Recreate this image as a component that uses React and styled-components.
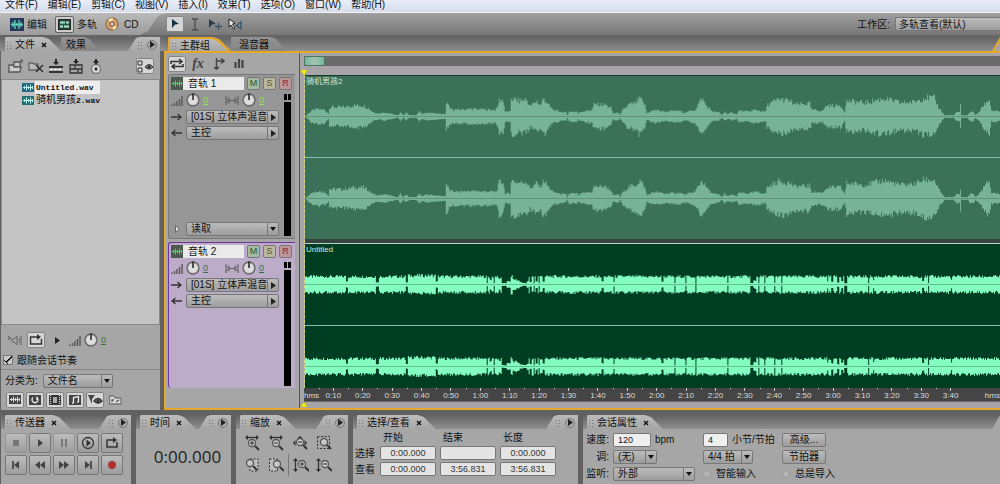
import React from 'react'
import styled, { createGlobalStyle, css } from 'styled-components'

const menus = ['文件(F)', '编辑(E)', '剪辑(C)', '视图(V)', '插入(I)', '效果(T)', '选项(O)', '窗口(W)', '帮助(H)']

// [position, half height] of the vocal clip
const vocals = [
  [0, 0], [2, 2], [6, 6], [12, 8], [19, 7], [23, 3], [24, 2], [24, 10], [40, 10], [48, 12], [58, 12], [63, 9], [67, 5],
  [72, 3], [80, 4], [88, 2], [91, 1], [93, 1], [95, 5], [98, 1], [101, 4], [104, 1], [111, 1], [114, 5], [117, 2],
  [121, 4], [130, 3], [140, 2], [141, 2], [141, 16], [145, 8], [152, 7], [165, 8], [190, 7], [192, 9], [194, 18],
  [198, 18], [200, 5], [205, 5], [206, 20], [214, 17], [221, 19], [225, 11], [232, 17], [235, 12], [239, 20],
  [243, 13], [248, 7], [254, 5], [261, 4], [262, 1], [264, 5], [272, 5], [273, 3], [276, 5], [287, 7], [289, 13],
  [300, 13], [306, 9], [308, 3], [314, 4], [315, 1], [318, 7], [324, 13], [330, 14], [335, 20], [340, 12], [342, 3],
  [345, 5], [350, 7], [360, 5], [374, 6], [380, 4], [390, 7], [397, 20], [402, 11], [408, 5], [414, 4], [417, 1],
  [420, 5], [423, 2], [427, 4], [432, 2], [434, 6], [444, 5], [450, 7], [460, 5], [461, 5], [462, 12], [474, 19],
  [485, 17], [490, 13], [505, 14], [507, 7], [518, 6], [522, 12], [536, 12], [540, 5], [542, 17], [560, 15],
  [580, 20], [595, 15], [610, 16], [620, 21], [630, 20], [634, 10], [638, 4], [640, 1], [649, 1], [653, 5],
  [655, 4], [656, 12], [657, 1], [663, 1], [666, 5], [669, 5], [671, 1], [675, 5], [679, 12], [685, 19], [687, 6],
  [695, 5]
]

// [start, width, half height] of the dips in the backing clip
const dips = [
  [41, 2, 3], [71, 3, 2], [101, 2, 2], [131, 2, 3], [182, 1, 1], [185, 2, 5], [189, 1, 1], [194, 2, 6], [197, 5, 1],
  [202, 4, 3], [206, 2, 9], [208, 4, 5], [212, 3, 4], [215, 3, 2], [218, 4, 1], [222, 2, 3], [225, 2, 2], [229, 1, 1],
  [231, 2, 3], [234, 1, 1], [238, 2, 3], [297, 2, 3], [309, 1, 2], [357, 2, 3], [370, 1, 1], [381, 1, 1],
  [391, 1, 0], [423, 1, 1], [446, 3, 1], [449, 3, 4], [454, 1, 1], [460, 1, 1], [470, 1, 1], [477, 1, 1],
  [523, 1, 4], [527, 2, 3], [533, 2, 2], [537, 2, 4], [540, 3, 1], [564, 1, 1], [569, 1, 4], [618, 2, 4],
  [624, 1, 1], [647, 1, 4]
]

const noise = (n) => {
  const v = Math.sin(n * 12.9898) * 43758.5453
  return v - Math.floor(v)
}

const vocalAmp = (x) => {
  let i = 0
  while (i < vocals.length - 2 && vocals[i + 1][0] <= x) i++
  const [x0, a0] = vocals[i]
  const [x1, a1] = vocals[i + 1]
  return a0 + ((a1 - a0) * (x - x0)) / (x1 - x0 || 1)
}

const backingAmp = (x) => {
  const dip = dips.find(([s, w]) => x >= s && x < s + w)
  if (dip) return dip[2]
  return x > 102 && x < 131 ? 9.6 : 8.4
}

const wavePath = (amp, seed) => {
  let top = ''
  let bottom = ''
  for (let x = 0; x < 696; x++) {
    const up = amp(x) * (0.7 + 0.36 * noise(x + seed))
    const down = amp(x) * (0.7 + 0.36 * noise(x + seed + 900))
    top += `L${x} ${(40 - up).toFixed(1)}H${x + 1}`
    bottom = `L${x + 1} ${(41 + down).toFixed(1)}H${x}` + bottom
  }
  return `M0 40${top}${bottom}Z`
}

const Channel = ({ amp, seed, color }) => (
  <Wave viewBox='0 0 696 81' preserveAspectRatio='none'>
    <path d={wavePath(amp, seed)} fill={color} />
    <path d='M0 40.5H696' stroke='#3c5a4d' strokeOpacity='.4' />
  </Wave>
)

const Icon = ({ w = 16, h = 16, children }) => (
  <svg width={w} height={h} viewBox={`0 0 ${w} ${h}`} fill='none' stroke='#333' strokeWidth='1.3'>
    {children}
  </svg>
)

const Close = () => (
  <Icon w={6} h={6}>
    <path d='M1 1l4 4M5 1L1 5' stroke='#111' strokeWidth='1.4' />
  </Icon>
)
const Play = () => (
  <Icon w={5} h={7}>
    <path d='M0 0l5 3.5L0 7z' fill='#222' stroke='none' />
  </Icon>
)
const Down = () => (
  <Icon w={6} h={4}>
    <path d='M0 0h6L3 4z' fill='#111' stroke='none' />
  </Icon>
)
const WaveIcon = ({ bg = '#1d566d', fg = '#b9f3ed' }) => (
  <Icon w={12} h={9}>
    <path d='M0 0h12v9H0z' fill={bg} stroke='none' />
    <path d='M1 4.500h10M2.500 3v3M4.500 1.500v6M6.500 3v3M8.500 1.500v6M10.500 3v3' stroke={fg} strokeWidth='1' />
  </Icon>
)
const Bars = ({ w = 12 }) => (
  <Icon w={w} h={11}>
    <path d='M1 11V9.500M3.500 11V8M6 11V6M8.500 11V4M11 11V1' stroke='#555' strokeWidth='1.4' />
  </Icon>
)
const Pan = () => (
  <Icon w={14} h={9}>
    <path d='M1 0v9M13 0v9M4 1.500v6M10 1.500v6M1 2l3 2.500L1 7M13 2l-3 2.500L13 7M4 4.500h6' stroke='#5c5c5c' strokeWidth='1' />
  </Icon>
)
const Dial = () => (
  <Icon w={14} h={14}>
    <circle cx='7' cy='7' r='6' fill='#c4c4c4' stroke='#666' />
    <circle cx='7' cy='7' r='4.500' fill='#dedede' stroke='none' />
    <path d='M7 7V0.500' stroke='#111' strokeWidth='1.4' />
  </Icon>
)
const Arrow = ({ back }) => (
  <Icon w={11} h={8}>
    <path d={back ? 'M11 4H1M4.500 1L1 4l3.500 3' : 'M0 4h10M6.500 1L10 4 6.500 7'} />
  </Icon>
)
const Loop = () => (
  <Icon w={14} h={12}>
    <path d='M8 3H1.500v7h11V5M5 10h3' strokeWidth='1.500' />
    <path d='M8 0l4 3-4 3z' fill='#333' stroke='none' />
  </Icon>
)
const Swap = () => (
  <Icon w={14} h={12}>
    <path d='M1 6V3.500h10M9 1l3 2.500L9 6M13 6v2.500H3M5 6L2 8.500 5 11' strokeWidth='1.500' />
  </Icon>
)
const Lens = ({ x, y, minus }) => (
  <>
    <path d={`M${x + 3} ${y + 3}l4 4`} strokeWidth='2' />
    <circle cx={x} cy={y} r='3.500' fill='#c9c9c9' stroke='#555' />
    {minus !== undefined && <path d={`M${x - 2} ${y}h4${minus ? '' : `M${x} ${y - 2}v4`}`} strokeWidth='1.1' />}
  </>
)
const Across = () => (
  <>
    <path d='M3 2.500h10' />
    <path d='M4 0v5L1 2.500zM12 0v5l3-2.500z' fill='#333' stroke='none' />
  </>
)
const Upright = () => (
  <>
    <path d='M2.500 3v10' />
    <path d='M0 4h5L2.500 1zM0 12h5l-2.500 3z' fill='#333' stroke='none' />
  </>
)

const zoomIcons = [
  ['水平放大', <Icon><Across /><Lens x={8} y={8} minus={false} /></Icon>],
  ['水平缩小', <Icon><Across /><Lens x={8} y={8} minus /></Icon>],
  ['全部缩小', <Icon><path d='M5 3.500h6L8 1zM3.500 5v6L1 8zM12.500 5v6L15 8z' fill='#333' stroke='none' /><Lens x={8} y={7} minus /></Icon>],
  ['缩放到选择', <Icon><path d='M1.500 1.500h12v12h-12z' strokeWidth='1' strokeDasharray='2 1.500' /><Lens x={8} y={7} /></Icon>],
  ['缩放左边', <Icon><path d='M6 2h8v12H6z' fill='#bdbdbd' strokeWidth='1' strokeDasharray='2 1.500' /><Lens x={6} y={6} /></Icon>],
  ['缩放右边', <Icon><path d='M1.500 2h8v12h-8z' fill='#bdbdbd' strokeWidth='1' strokeDasharray='2 1.500' /><Lens x={9} y={7} /></Icon>],
  ['垂直放大', <Icon><Upright /><Lens x={9} y={7} minus={false} /></Icon>],
  ['垂直缩小', <Icon><Upright /><Lens x={9} y={7} minus /></Icon>]
]

const transport = [
  ['停止', <path d='M4 4h6v6H4z' fill='#777' stroke='none' />, true],
  ['播放', <path d='M5 3l5 4-5 4z' fill='#444' stroke='none' />],
  ['暂停', <path d='M5 3v8M9 3v8' stroke='#777' strokeWidth='2' />, true],
  ['从光标播放', <><circle cx='7' cy='7' r='5.500' /><path d='M5.500 3.500L10 7l-4.500 3.500z' fill='#333' stroke='none' /></>],
  ['循环播放', <><path d='M8 4H2v7h10V6M5 11h3' strokeWidth='1.500' /><path d='M8 1l4 3-4 3z' fill='#333' stroke='none' /></>],
  ['转到开始', <><path d='M4 3v8' strokeWidth='1.500' /><path d='M10 3v8L5 7z' fill='#444' stroke='none' /></>],
  ['倒带', <path d='M7 3v8L2 7zM12 3v8L7 7z' fill='#444' stroke='none' />],
  ['快进', <path d='M2 3v8l5-4zM7 3v8l5-4z' fill='#444' stroke='none' />],
  ['转到结尾', <><path d='M10 3v8' strokeWidth='1.500' /><path d='M4 3v8l5-4z' fill='#444' stroke='none' /></>],
  ['录音', <circle cx='7' cy='7' r='3.500' fill='#bd2929' stroke='#934848' />]
]

const PanelTabs = ({ tabs, active, noMenu }) => (
  <Strip>
    {tabs.map((t, i) => (
      <Tab key={t} $back={i > 0} $active={active && i === 0}>
        <TabFace $back={i > 0} $active={active}>
          {i === 0 && <Grip />}
          {t}
          {i === 0 && !active && <Close />}
        </TabFace>
      </Tab>
    ))}
    <Spacer />
    {active || noMenu ? (
      <Corner $active={active} />
    ) : (
      <PanelMenu>
        <Grip />
        <RoundButton aria-label='面板菜单'><Play /></RoundButton>
      </PanelMenu>
    )}
  </Strip>
)

const Pick = ({ id, label, value, side, width }) => (
  <PickBox $width={width}>
    <select id={id} aria-label={label} defaultValue={value}>
      <option>{value}</option>
    </select>
    <PickArrow>{side ? <Play /> : <Down />}</PickArrow>
  </PickBox>
)

const Track = ({ name, selected }) => (
  <TrackHead $selected={selected}>
    <TrackTop>
      <TrackBadge><WaveIcon bg='#4c5a4d' fg='#4fd466' /></TrackBadge>
      <NameInput aria-label='音轨名称' defaultValue={name} />
      <Toggle $tone='#a3baa3' $ink='#1f5a2c'>M</Toggle>
      <Toggle $tone='#b9b89f' $ink='#55511f'>S</Toggle>
      <Toggle $tone='#bd9498' $ink='#8a2530'>R</Toggle>
    </TrackTop>
    <TrackBody>
      <TrackControls>
        <KnobRow>
          <Bars />
          <Dial />
          <Amount $dim={selected}>0</Amount>
          <Pan />
          <Dial />
          <Amount $dim={selected}>0</Amount>
        </KnobRow>
        <RouteRow><Arrow /><Pick label='输入' value='[01S] 立体声混音' side /></RouteRow>
        <RouteRow><Arrow back /><Pick label='输出' value='主控' side /></RouteRow>
        {!selected && (
          <AutoRow>
            <Icon w={5} h={8}><path d='M.5 .5L4.500 4 .5 7.500z' fill='#ddd' stroke='#666' strokeWidth='1' /></Icon>
            <Pick label='自动' value='读取' />
          </AutoRow>
        )}
      </TrackControls>
      <Meter />
    </TrackBody>
  </TrackHead>
)

const times = Array.from({ length: 22 }, (_, i) => {
  const s = (i + 1) * 10
  return `${Math.floor(s / 60)}:${String(s % 60).padStart(2, '0')}`
})

const App = () => (
  <Page>
    <GlobalStyle />
    <MenuBar>
      {menus.map(m => <MenuItem key={m}>{m}</MenuItem>)}
    </MenuBar>
    <ToolBar>
      <Views>
        <ViewButton>
          <Icon w={14} h={13}>
            <path d='M0 0h14v13H0z' fill='#243859' stroke='none' />
            <path d='M1 6.500h12M3 4v5M5 2v9M7 5v3M9 2v9M11 4v5' stroke='#62d6bd' />
          </Icon>
          编辑
        </ViewButton>
        <ViewButton>
          <IconFrame>
            <Icon w={13} h={11}>
              <path d='M.5 .5h12v10H.5z' fill='#2d5247' stroke='#222' />
              <path d='M2 3.500h5M8 3.500h3M2 7.500h3M6 7.500h5' stroke='#a8e7c8' strokeWidth='2' />
            </Icon>
          </IconFrame>
          多轨
        </ViewButton>
        <ViewButton $wide>
          <Icon w={14} h={14}>
            <circle cx='7' cy='7' r='6' fill='#d8a46d' stroke='#9b704a' />
            <path d='M7 7L3 2.500A6 6 0 0 1 8 1zM7 7l5 3a6 6 0 0 1-4 3z' fill='#f3dfaf' stroke='none' />
            <circle cx='7' cy='7' r='2' fill='#eee' stroke='#8b634a' />
          </Icon>
          CD
        </ViewButton>
      </Views>
      <Tools>
        <IconButton aria-label='混合工具' $on>
          <Icon w={12} h={12}><path d='M3 1l7 5-4 .5L3 10z' fill='#163243' stroke='none' /></Icon>
        </IconButton>
        <IconButton aria-label='时间选择工具'>
          <Icon w={8} h={13}><path d='M1 1h2l1 1 1-1h2M4 2v9M1 12h2l1-1 1 1h2' stroke='#4d4d4d' /></Icon>
        </IconButton>
        <IconButton aria-label='移动工具'>
          <Icon w={14} h={13}><path d='M1 1l7 5-4 .5L1 10z' fill='#253f50' stroke='none' /><path d='M10.500 5v7M7 8.500h7' stroke='#35566c' /></Icon>
        </IconButton>
        <IconButton aria-label='刷选工具'>
          <Icon w={15} h={13}><path d='M1 1l6 4-2.500 1L7 10l-1.500 1-2.500-4L1 9z' fill='#eee' stroke='#222' strokeWidth='1' /><path d='M13 4L8.500 7.500 13 11z' stroke='#35566c' /></Icon>
        </IconButton>
      </Tools>
      <Spacer />
      <Workspace>
        工作区:
        <select defaultValue='多轨查看(默认)'><option>多轨查看(默认)</option></select>
      </Workspace>
    </ToolBar>

    <Middle>
      <FilePanel>
        <PanelTabs tabs={['文件', '效果']} />
        <FileTools>
          <IconButton aria-label='导入文件'>
            <Icon w={16} h={15}><path d='M1 13V6h4l1 2h7l-1 5zM6 6V3h6v4M12 2l2-1v3' fill='#ccc' stroke='#555' /></Icon>
          </IconButton>
          <IconButton aria-label='关闭文件'>
            <Icon w={16} h={15}><path d='M1 11V4h4l1 1h4v6z' fill='#bbb' stroke='#666' /><path d='M8 6l7 7M15 6l-7 7' strokeWidth='1.500' /></Icon>
          </IconButton>
          <IconButton aria-label='插入多轨'>
            <Icon w={14} h={15}><path d='M4 3h6L7 6zM6 0h2v3H6z' fill='#222' stroke='none' /><path d='M0 7h14v2H0zM0 12h14v2H0z' fill='#333' stroke='none' /><path d='M1 10.500h12' stroke='#eee' strokeDasharray='3 1' /></Icon>
          </IconButton>
          <IconButton aria-label='编辑文件'>
            <Icon w={14} h={15}><path d='M4 2h6L7 5zM6 0h2v3H6z' fill='#222' stroke='none' /><path d='M1 6h12v8H1zM1 10h12M6 7v3M9 10v4' /></Icon>
          </IconButton>
          <IconButton aria-label='插入 CD'>
            <Icon w={12} h={15}><circle cx='6' cy='10' r='4.500' fill='#ddd' stroke='#777' /><path d='M3 2h6L6 6zM5 0h2v3H5z' fill='#222' stroke='none' /><circle cx='6' cy='10' r='1' /></Icon>
          </IconButton>
          <Spacer />
          <IconButton aria-label='显示选项' $on>
            <Icon w={16} h={13}><path d='M1 1h4v4H1zM1 8h4v4H1z' strokeWidth='1' /><path d='M8 7q4-5 8 0-4 4-8 0z' fill='#888' strokeWidth='1' /><circle cx='12' cy='7' r='1' fill='#222' /></Icon>
          </IconButton>
        </FileTools>
        <FileList>
          <FileItem><WaveIcon bg='#236887' /><FileName $on>Untitled.wav</FileName></FileItem>
          <FileItem><WaveIcon bg='#2a6f72' /><FileName><Han>骑机男孩</Han>2.wav</FileName></FileItem>
        </FileList>
        <Preview>
          <IconButton aria-label='自动播放'>
            <Icon w={14} h={11}><path d='M4 4h2l3-3v9L6 7H4zM11 3q2 3 0 5M13 1v9M0 1l3 2-3 2z' stroke='#666' strokeWidth='1' /></Icon>
          </IconButton>
          <IconButton aria-label='循环' $on><Loop /></IconButton>
          <IconButton aria-label='播放'><Play /></IconButton>
          <Bars />
          <Dial />
          <Amount $dim>0</Amount>
        </Preview>
        <Check>
          <input type='checkbox' defaultChecked />
          跟随会话节奏
        </Check>
        <SortRow>
          <label htmlFor='sort'>分类为:</label>
          <Pick id='sort' value='文件名' width='70px' />
        </SortRow>
        <FilterRow>
          <IconButton aria-label='波形' $on><WaveIcon bg='#444' fg='#ddd' /></IconButton>
          <IconButton aria-label='循环文件' $on>
            <Icon w={12} h={10}><path d='M0 0h12v10H0z' fill='#444' stroke='none' /><path d='M4 2.500a3 3 0 1 0 4 0V5' stroke='#eee' /></Icon>
          </IconButton>
          <IconButton aria-label='视频' $on>
            <Icon w={12} h={10}><path d='M0 0h12v10H0z' fill='#333' stroke='none' /><path d='M1.500 0v10M10.500 0v10' stroke='#ddd' strokeDasharray='1 1' /><path d='M4 2h4v6H4z' fill='#aaa' stroke='none' /></Icon>
          </IconButton>
          <IconButton aria-label='MIDI' $on>
            <Icon w={12} h={10}><path d='M0 0h12v10H0z' fill='#444' stroke='none' /><path d='M4.500 8V2.500L9.500 1.500V7M3 8h1.500M8 7h1.500' stroke='#eee' /></Icon>
          </IconButton>
          <IconButton aria-label='过滤' $on>
            <Icon w={15} h={11}><path d='M0 1h7L4 5v5z' fill='#444' stroke='none' /><path d='M6 7q4-5 8 0-4 4-8 0z' fill='#888' /><circle cx='10' cy='7' r='1' /></Icon>
          </IconButton>
          <IconButton aria-label='完整路径'>
            <Icon w={13} h={10}><path d='M.5 9V1H5l1 2h6v6z' fill='#ddd' stroke='#777' /><path d='M3 7V5h2M7 7l3-2' stroke='#555' /></Icon>
          </IconButton>
        </FilterRow>
      </FilePanel>

      <MainPanel>
        <PanelTabs tabs={['主群组', '混音器']} active />
        <MainBody>
          <TrackColumn>
            <TrackTools>
              <IconButton aria-label='输入输出' $on><Swap /></IconButton>
              <FxButton>fx</FxButton>
              <IconButton aria-label='发送'>
                <Icon w={11} h={13}><path d='M2.500 1v11M0 10l2.500 2L5 10M2.500 4H10M7 1.500L10 4 7 6.500' stroke='#444' strokeWidth='1.500' /></Icon>
              </IconButton>
              <IconButton aria-label='均衡'>
                <Icon w={10} h={9}><path d='M1.500 3v6M5 0v9M8.500 1v8' stroke='#444' strokeWidth='2.200' /></Icon>
              </IconButton>
            </TrackTools>
            <Track name='音轨 1' />
            <Track name='音轨 2' selected />
            <ColumnFoot />
          </TrackColumn>
          <Canvas>
            <Overview><OverviewThumb /></Overview>
            <MarkerStrip>
              <Icon w={8} h={5}><path d='M0 0h8L4 5z' fill='#f5ee18' stroke='#a79c1d' strokeWidth='.5' /></Icon>
            </MarkerStrip>
            <Lanes>
              <Clip>
                <ClipName>骑机男孩2</ClipName>
                <Channel amp={vocalAmp} seed={3} color='#77b397' />
                <Divider />
                <Channel amp={vocalAmp} seed={61} color='#77b397' />
              </Clip>
              <Clip $selected>
                <ClipName>Untitled</ClipName>
                <Channel amp={backingAmp} seed={5} color='#84fdc1' />
                <Divider />
                <Channel amp={backingAmp} seed={44} color='#84fdc1' />
              </Clip>
            </Lanes>
            <Ruler>
              <RulerEnd $span={0.5}>hms</RulerEnd>
              {times.map(t => <RulerCell key={t}>{t}</RulerCell>)}
              <RulerEnd $span={1.18} $right>hms</RulerEnd>
            </Ruler>
            <MarkerStrip $foot>
              <Icon w={8} h={5}><path d='M0 5h8L4 0z' fill='#f5ee18' stroke='#a79c1d' strokeWidth='.5' /></Icon>
            </MarkerStrip>
          </Canvas>
        </MainBody>
      </MainPanel>
    </Middle>

    <Bottom>
      <Dock $width='130px'>
        <PanelTabs tabs={['传送器']} />
        <TransportGrid>
          {transport.map(([label, shape, off]) => (
            <TransportButton key={label} aria-label={label} disabled={off}>
              <Icon w={14} h={14}>{shape}</Icon>
            </TransportButton>
          ))}
        </TransportGrid>
      </Dock>
      <Dock $width='95px'>
        <PanelTabs tabs={['时间']} />
        <Clock>0:00.000</Clock>
      </Dock>
      <Dock $width='112px'>
        <PanelTabs tabs={['缩放']} />
        <ZoomGrid>
          {zoomIcons.map(([label, icon], i) => (
            <ZoomButton key={label} aria-label={label} $line={i === 6}>{icon}</ZoomButton>
          ))}
        </ZoomGrid>
      </Dock>
      <Dock $width='225px'>
        <PanelTabs tabs={['选择/查看']} />
        <TimeTable>
          <thead>
            <tr><td /><th>开始</th><th>结束</th><th>长度</th></tr>
          </thead>
          <tbody>
            <tr>
              <th>选择</th>
              <td><TimeInput aria-label='选择开始' defaultValue='0:00.000' /></td>
              <td><TimeInput aria-label='选择结束' /></td>
              <td><TimeInput aria-label='选择长度' defaultValue='0:00.000' /></td>
            </tr>
            <tr>
              <th>查看</th>
              <td><TimeInput aria-label='查看开始' defaultValue='0:00.000' /></td>
              <td><TimeInput aria-label='查看结束' defaultValue='3:56.831' /></td>
              <td><TimeInput aria-label='查看长度' defaultValue='3:56.831' /></td>
            </tr>
          </tbody>
        </TimeTable>
      </Dock>
      <Dock>
        <PanelTabs tabs={['会话属性']} noMenu />
        <Session>
          <FieldLabel htmlFor='tempo'>速度:</FieldLabel>
          <Field><ValueInput id='tempo' defaultValue='120' $width='38px' />bpm</Field>
          <Field><ValueInput id='beats' defaultValue='4' $width='25px' /><label htmlFor='beats'>小节/节拍</label></Field>
          <PushButton>高级...</PushButton>
          <FieldLabel htmlFor='key'>调:</FieldLabel>
          <Pick id='key' value='(无)' width='44px' />
          <Pick label='拍号' value='4/4 拍' width='50px' />
          <PushButton>节拍器</PushButton>
          <FieldLabel htmlFor='monitor'>监听:</FieldLabel>
          <Pick id='monitor' value='外部' width='82px' />
          <Option><input type='checkbox' />智能输入</Option>
          <Option><input type='checkbox' />总是导入</Option>
        </Session>
      </Dock>
    </Bottom>
  </Page>
)

export default App

//styles

const GlobalStyle = createGlobalStyle`
  * {
    box-sizing: border-box;
  }
  body {
    margin: 0;
    background: #616161;
  }
  body, button, input, select {
    font-family: 'Liberation Sans', 'Noto Sans CJK SC', sans-serif;
    font-size: 10px;
    line-height: 13px;
    color: #111;
  }
  button, input, select {
    margin: 0;
    padding: 0;
    border: 0;
    background: none;
  }
  svg {
    display: block;
    flex: none;
  }
`

const raised = css`
  border: 1px solid #777;
  border-radius: 2px;
  background: linear-gradient(#bcbcbc, #9d9d9d);
`

const Page = styled.div`
  display: flex;
  flex-direction: column;
  height: 100vh;
  min-height: 480px;
  overflow: hidden;
`
const MenuBar = styled.nav`
  display: flex;
  flex: none;
  gap: 10px;
  height: 13px;
  padding-left: 5px;
  align-items: flex-start;
  background: linear-gradient(#e8edf8, #d5dded);
  border-bottom: 1px solid #f3f3f3;
  overflow: hidden;
`
const MenuItem = styled.button`
  height: 10px;
  line-height: 10px;
  white-space: nowrap;
`
const ToolBar = styled.header`
  display: flex;
  flex: none;
  align-items: stretch;
  height: 22px;
  background: linear-gradient(#9f9f9f, #777);
`
const Views = styled.div`
  display: flex;
  align-items: center;
  gap: 8px;
  width: 166px;
  padding-left: 10px;
  background: linear-gradient(#bababa, #9c9c9c);
  clip-path: polygon(0 0, 100% 0, 158px 3px, 148px 18px, 140px 100%, 0 100%);
`
const ViewButton = styled.button`
  display: flex;
  align-items: center;
  gap: ${props => (props.$wide ? '5px' : '3px')};
`
const IconFrame = styled.span`
  padding: 2px;
  background: #ccc;
  border: 1px solid #666;
  border-radius: 2px;
`
const Tools = styled.div`
  display: flex;
  align-items: center;
  gap: 2px;
`
const IconButton = styled.button`
  display: flex;
  align-items: center;
  justify-content: center;
  min-width: 18px;
  height: 16px;
  border-radius: 2px;
  ${props => props.$on && css`
    background: #d6d6d6;
    border: 1px solid #858585;
  `}
`
const Spacer = styled.div`
  flex: 1;
`
const Workspace = styled.label`
  display: flex;
  align-items: center;
  gap: 5px;

  select {
    ${raised}
    appearance: none;
    width: 105px;
    height: 14px;
    padding-left: 3px;
    border-right: 0;
    border-radius: 2px 0 0 2px;
  }
`
const Middle = styled.main`
  display: flex;
  flex: 1;
  gap: 4px;
  min-height: 0;
  padding: 2px 0 0 1px;
  background: linear-gradient(#626262, #939393 16px, #626262 16px);
`
const FilePanel = styled.section`
  display: flex;
  flex-direction: column;
  flex: none;
  width: 159px;
  background: #a6a6a6;
`
const Strip = styled.div`
  display: flex;
  flex: none;
  height: 14px;
  padding-left: 4px;
  background: linear-gradient(#626262, #8f8f8f);
`
const Tab = styled.button`
  height: 14px;
  ${props => !props.$back && 'clip-path: polygon(0 1px, 1px 0, calc(100% - 18px) 0, calc(100% - 12px) 2px, 100% 100%, 0 100%);'}
  ${props => props.$active && 'background: #e6a828; padding: 2px 3px 0 2px;'}
`
const TabFace = styled.span`
  display: flex;
  align-items: center;
  gap: ${props => (props.$back ? '0' : '3px')};
  height: 100%;
  padding: 1px ${props => (props.$active ? '18px' : '14px')} 0 ${props => (props.$back ? (props.$active ? '8px' : '5px') : '1px')};
  background: ${props => (props.$back ? 'linear-gradient(#929292, #858585)' : 'linear-gradient(#bcbcbc, #a6a6a6)')};
  clip-path: polygon(0 0, calc(100% - 16px) 0, calc(100% - 11px) 2px, 100% 100%, 0 100%);
  white-space: nowrap;

  svg {
    margin-left: 3px;
  }
`
const Grip = styled.span`
  width: 6px;
  height: 8px;
  background: radial-gradient(circle, #777 1px, transparent 1px) 0 0 / 3px 3px;
`
const PanelMenu = styled.div`
  display: flex;
  align-items: center;
  gap: 4px;
  padding: 1px 3px 0 9px;
  background: linear-gradient(#bababa, #a6a6a6);
  clip-path: polygon(0 100%, 8px 1px, 12px 0, 100% 0, 100% 100%);
`
const RoundButton = styled.button`
  display: flex;
  align-items: center;
  justify-content: center;
  width: 10px;
  height: 10px;
  border: 1px solid #777;
  border-radius: 50%;
  background: #aaa;
`
const Corner = styled.div`
  width: 8px;
  background: ${props => (props.$active ? 'linear-gradient(120deg, transparent 40%, #e6a828 40% 65%, #a6a6a6 65%)' : '#a6a6a6')};
  clip-path: polygon(0 100%, 100% 0, 100% 100%);
`
const FileTools = styled.div`
  display: flex;
  align-items: center;
  gap: 2px;
  height: 28px;
  padding: 2px 6px 0 6px;
`
const FileList = styled.ul`
  flex: 1;
  min-height: 0;
  margin: 0;
  padding: 1px 0 0 20px;
  list-style: none;
  background: #c4c4c4;
  border: 1px solid #8a8a8a;
`
const FileItem = styled.li`
  display: flex;
  align-items: center;
  gap: 1px;
  height: 13px;
`
const FileName = styled.span`
  padding: 0 6px 0 1px;
  font-family: 'Liberation Mono', 'Noto Sans CJK SC', monospace;
  font-size: 8px;
  font-weight: bold;
  background: ${props => (props.$on ? '#ededed' : 'none')};
`
const Han = styled.span`
  font-size: 10px;
  font-weight: normal;
`
const Preview = styled.div`
  display: flex;
  align-items: center;
  gap: 3px;
  height: 28px;
  padding: 2px 6px 0 5px;
`
const Check = styled.label`
  display: flex;
  align-items: center;
  gap: 4px;
  height: 14px;
  margin-bottom: 2px;
  padding-left: 2px;

  input {
    appearance: none;
    width: 10px;
    height: 10px;
    border: 1px solid #777;
    background: #c9c9c9;
  }
  input:checked {
    background: linear-gradient(45deg, transparent 35%, #111 35% 50%, transparent 50%) 0 3px / 5px 5px no-repeat,
      linear-gradient(-45deg, transparent 45%, #111 45% 62%, transparent 62%) 2px 0 / 6px 8px no-repeat, #c9c9c9;
  }
`
const SortRow = styled.div`
  display: flex;
  align-items: center;
  gap: 5px;
  height: 22px;
  padding-left: 4px;
  border-top: 1px solid #888;
`
const FilterRow = styled.div`
  display: flex;
  align-items: center;
  gap: 2px;
  height: 17px;
  margin-bottom: 2px;
  padding-left: 5px;
`
const PickBox = styled.span`
  ${raised}
  display: flex;
  width: ${props => props.$width || '93px'};
  height: 14px;

  select {
    appearance: none;
    flex: 1;
    min-width: 0;
    padding-left: 4px;
    line-height: 12px;
    white-space: nowrap;
  }
`
const PickArrow = styled.span`
  display: flex;
  align-items: center;
  justify-content: center;
  flex: none;
  width: 11px;
  border-left: 1px solid #777;
  pointer-events: none;
`
const MainPanel = styled.section`
  display: flex;
  flex: 1;
  flex-direction: column;
  min-width: 0;

  > div:first-child {
    padding-left: 4px;
  }
`
const MainBody = styled.div`
  display: flex;
  flex: 1;
  min-height: 0;
  background: #a6a6a6;
  border: 2px solid #e6a828;
  border-right: 0;
`
const TrackColumn = styled.div`
  display: flex;
  flex-direction: column;
  flex: none;
  width: 129px;
  padding-left: 2px;
`
const TrackTools = styled.div`
  display: flex;
  flex: none;
  align-items: center;
  gap: 2px;
  height: 21px;
`
const FxButton = styled.button`
  width: 20px;
  font-family: 'Liberation Serif', serif;
  font-size: 14px;
  font-style: italic;
  font-weight: bold;
  color: #444;
`
const TrackHead = styled.section`
  display: flex;
  flex-direction: column;
  flex: ${props => (props.$selected ? '1' : 'none')};
  height: ${props => (props.$selected ? 'auto' : '165px')};
  min-height: 0;
  margin-bottom: ${props => (props.$selected ? '0' : '3px')};
  padding: 1px 3px 0 2px;
  border: 1px solid ${props => (props.$selected ? '#71349a' : '#777')};
  border-width: 1px 0 ${props => (props.$selected ? '0' : '1px')} 1px;
  border-radius: 3px 0 0 3px;
  background: ${props => (props.$selected ? '#bcabc9' : '#969696')};
`
const TrackTop = styled.div`
  display: flex;
  align-items: center;
  gap: 3px;
  height: 15px;
`
const TrackBadge = styled.span`
  display: flex;
  align-items: center;
  height: 13px;
  margin-right: -3px;
  background: #4c5a4d;
`
const NameInput = styled.input`
  flex: 1;
  min-width: 0;
  height: 13px;
  padding-left: 5px;
  background: #eaeaea;
`
const Toggle = styled.button`
  width: 13px;
  height: 13px;
  border: 1px solid #777;
  border-radius: 2px;
  font-size: 9px;
  line-height: 11px;
  color: ${props => props.$ink};
  background: ${props => props.$tone};
`
const TrackBody = styled.div`
  display: flex;
  flex: 1;
  min-height: 0;
`
const TrackControls = styled.div`
  display: flex;
  flex: 1;
  flex-direction: column;
`
const KnobRow = styled.div`
  display: flex;
  align-items: center;
  gap: 3px;
  height: 18px;
`
const Amount = styled.span`
  width: 19px;
  font-size: 9px;
  line-height: 11px;
  color: ${props => (props.$dim ? '#36713c' : '#8fe053')};
  text-decoration: underline;
`
const RouteRow = styled.div`
  display: flex;
  align-items: center;
  gap: 4px;
  height: 16px;
`
const AutoRow = styled.div`
  display: flex;
  align-items: center;
  gap: 6px;
  margin-top: auto;
  padding: 0 0 2px 4px;
`
const Meter = styled.div`
  flex: none;
  width: 7px;
  margin: 3px 1px 2px 0;
  background: linear-gradient(90deg, #000 3px, transparent 3px 4px, #000 4px) 0 0 / 7px 6px no-repeat,
    linear-gradient(#000, #000) 0 8px no-repeat;
`
const ColumnFoot = styled.div`
  flex: none;
  height: 20px;
`
const Canvas = styled.div`
  display: flex;
  flex: 1;
  flex-direction: column;
  min-width: 0;
  margin-left: 4px;
  padding: 3px 0 0 4px;
  border-left: 1px solid #555;
  background: #a8a5a8;
`
const Overview = styled.div`
  flex: none;
  height: 10px;
  background: #6b6a6a;
`
const OverviewThumb = styled.div`
  width: 21px;
  height: 10px;
  border: 1px solid #4a7763;
  border-radius: 2px;
  background: linear-gradient(90deg, #76b89a, #a3c3b4, #76b89a);
`
const MarkerStrip = styled.div`
  flex: none;
  height: ${props => (props.$foot ? '6px' : '9px')};
  margin-left: -4px;
  padding-top: ${props => (props.$foot ? '0' : '4px')};
`
const Lanes = styled.div`
  display: flex;
  flex: 1;
  flex-direction: column;
  min-height: 0;
  border-left: 1px dashed #d2d47c;
  overflow: hidden;
`
const Clip = styled.div`
  position: relative;
  flex: none;
  border-top: 1px solid ${props => (props.$selected ? '#b7d9c8' : '#17382c')};
  border-bottom: 4px solid #37443d;
  background: ${props => (props.$selected ? '#003e23' : '#3a7158')};
`
const ClipName = styled.span`
  position: absolute;
  left: 1px;
  top: 1px;
  font-size: 8px;
  line-height: 10px;
  color: #d8e8df;
`
const Wave = styled.svg`
  width: 100%;
  height: 81px;
`
const Divider = styled.div`
  height: 1px;
  background: #89bcb8;
`
const Ruler = styled.div`
  display: flex;
  flex: none;
  height: 14px;
  background: #454545;
  border-bottom: 1px solid #666;
  font-size: 8px;
  line-height: 15px;
  color: #ddd;
`
const RulerCell = styled.span`
  flex: 1 1 0;
  min-width: 0;
  text-align: center;
  background: linear-gradient(#ccc, #ccc) 50% 0 / 1px 3px no-repeat, linear-gradient(#ccc, #ccc) 0 0 / 1px 1px no-repeat;
`
const RulerEnd = styled.span`
  flex: ${props => props.$span} 1 0;
  min-width: 0;
  text-align: ${props => (props.$right ? 'right' : 'left')};
`
const Bottom = styled.footer`
  display: flex;
  flex: none;
  gap: 5px;
  height: 74px;
  padding: 5px 0 0 1px;
  background: #616161;
`
const Dock = styled.section`
  display: flex;
  flex-direction: column;
  flex: ${props => (props.$width ? 'none' : '1')};
  width: ${props => props.$width || 'auto'};
  min-width: 0;
  background: #a6a6a6;
`
const TransportGrid = styled.div`
  display: grid;
  grid-template-columns: repeat(5, 22px);
  gap: 2px;
  padding: 4px;
`
const TransportButton = styled.button`
  ${raised}
  display: flex;
  align-items: center;
  justify-content: center;
  height: 20px;

  &:disabled {
    border-color: #959595;
  }
`
const Clock = styled.div`
  flex: 1;
  padding: 18px 0 0 8px;
  font-family: 'Open Sans', sans-serif;
  font-size: 17px;
  line-height: 20px;
  text-align: center;
  color: #222;
`
const ZoomGrid = styled.div`
  display: grid;
  grid-template-columns: repeat(4, 24px);
  grid-auto-rows: 22px;
  padding: 3px 4px;
`
const ZoomButton = styled.button`
  display: flex;
  align-items: center;
  justify-content: center;
  border-left: ${props => (props.$line ? '1px solid #777' : '0')};
`
const TimeTable = styled.table`
  width: 201px;
  table-layout: fixed;
  border-spacing: 0;
  margin-left: 2px;

  th, td {
    padding: 0 0 0 4px;
    height: 16px;
    font-weight: normal;
    text-align: left;
    line-height: 13px;
  }
  td:first-child, tbody th {
    padding: 0;
    width: 21px;
  }
  thead th {
    padding-left: 7px;
  }
`
const TimeInput = styled.input`
  display: block;
  width: 56px;
  height: 14px;
  border: 1px solid #777;
  border-radius: 2px;
  font-size: 9px;
  text-align: center;
  color: #333;
  background: #e4e4e4;
`
const Session = styled.div`
  display: grid;
  grid-template-columns: 26px 86px 75px 44px;
  grid-auto-rows: 17px;
  column-gap: 4px;
  align-items: center;
  padding-top: 2px;
`
const FieldLabel = styled.label`
  text-align: right;
  white-space: nowrap;
`
const Field = styled.div`
  display: flex;
  align-items: center;
  gap: 4px;
  white-space: nowrap;
`
const ValueInput = styled.input`
  width: ${props => props.$width};
  height: 14px;
  padding-left: 4px;
  border: 1px solid #777;
  border-radius: 2px;
  font-size: 9px;
  background: #efefef;
`
const PushButton = styled.button`
  ${raised}
  height: 14px;
  line-height: 12px;
`
const Option = styled.label`
  display: flex;
  align-items: center;
  gap: 5px;
  white-space: nowrap;

  input {
    appearance: none;
    flex: none;
    width: 8px;
    height: 8px;
    border: 1px solid #999;
    border-radius: 50%;
    background: #b4b4b4;
  }
`
